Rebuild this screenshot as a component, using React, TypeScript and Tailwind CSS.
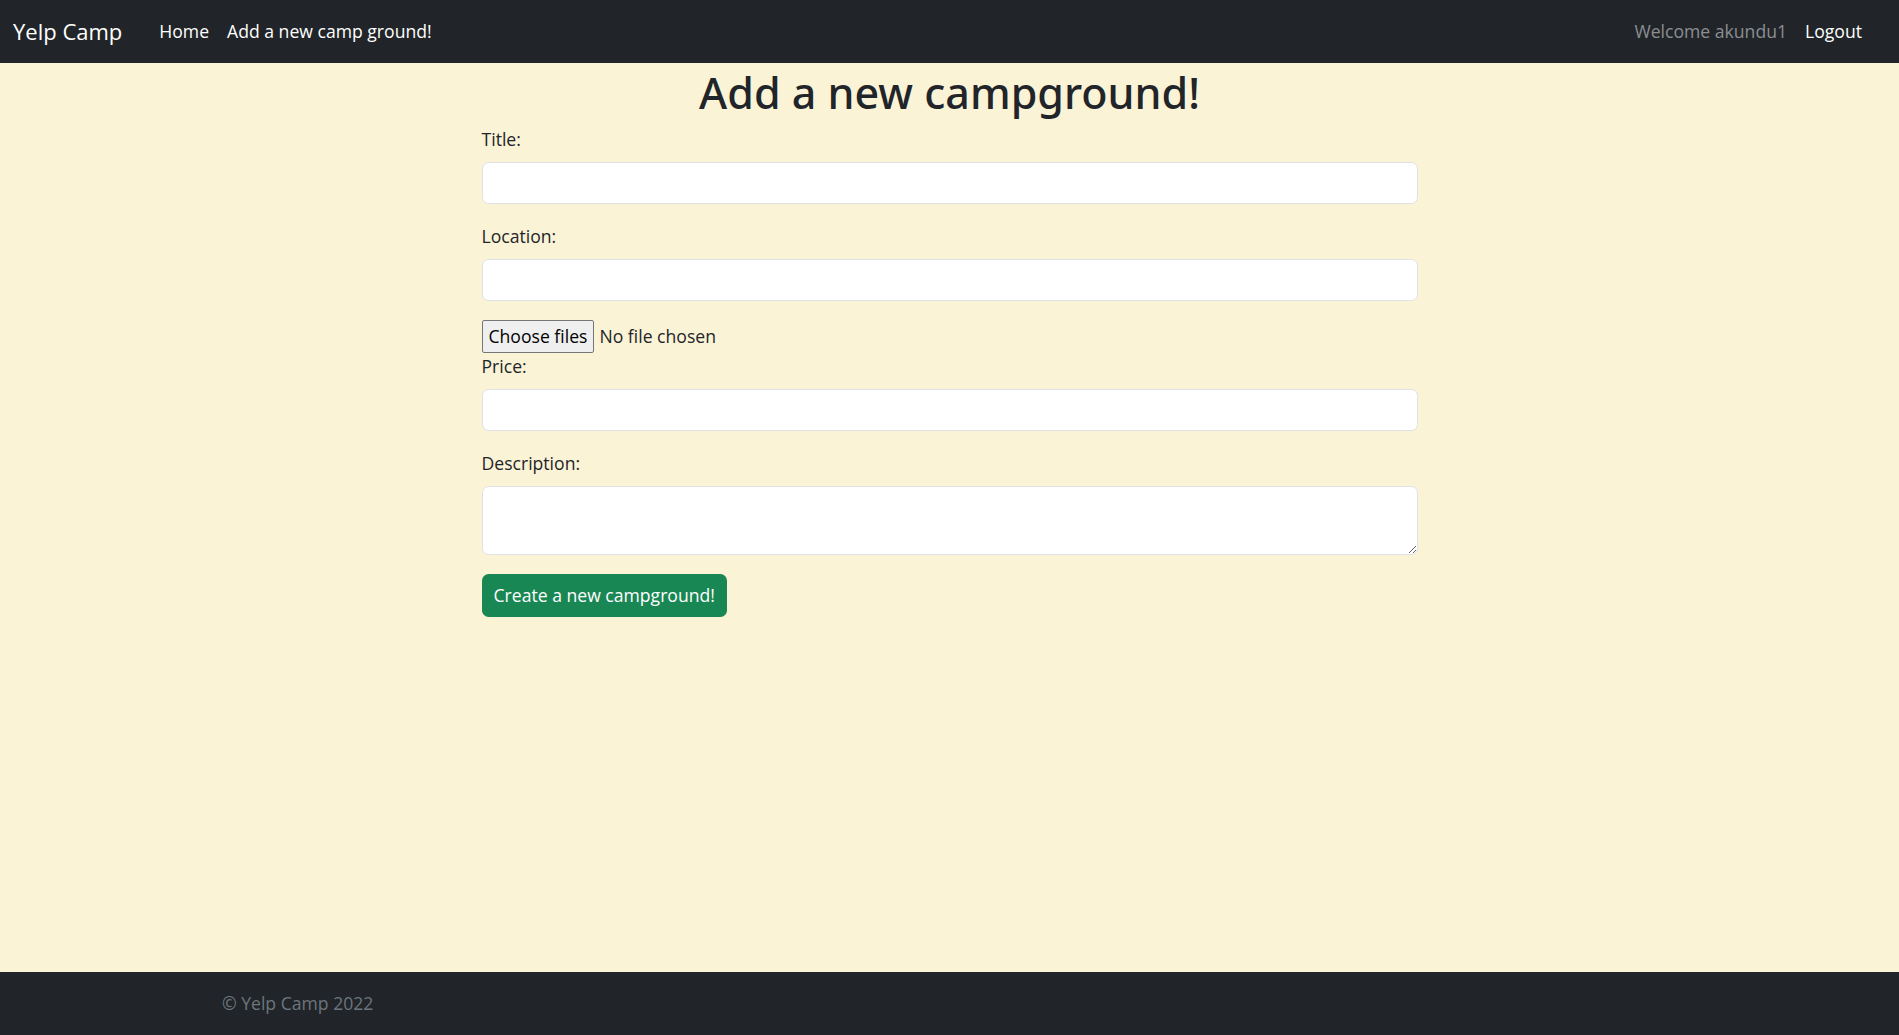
const inputCls =
  'block w-full h-[42px] bg-white border border-[#dee2e6] rounded-[6.6px] px-[13px] outline-none';

function Field({ label, id }: { label: string; id: string }) {
  return (
    <div className="mb-[19px]">
      <label htmlFor={id} className="block leading-[26px] mb-[10px]">
        {label}
      </label>
      <input id={id} type="text" className={inputCls} />
    </div>
  );
}

export default function App() {
  return (
    <div
      className="min-h-screen flex flex-col bg-[#fbf3d6] text-[#212529] text-[17.6px] leading-[26.4px]"
      style={{ fontFamily: '"Open Sans", sans-serif' }}
    >
      <nav className="h-[63px] bg-[#212529] flex items-center px-[13px] shrink-0">
        <span className="text-[22px] text-white mr-[37px]">Yelp Camp</span>
        <a className="text-white mr-[18px]">Home</a>
        <a className="text-white">Add a new camp ground!</a>
        <div className="ml-auto flex items-center gap-[18px] pr-[24px]">
          <span className="text-[#8c8e91]">Welcome akundu1</span>
          <a className="text-white">Logout</a>
        </div>
      </nav>

      <main className="flex-1">
        <h1
          className="text-[43px] leading-[53px] font-medium text-center pt-[3px] mb-[7px]"
          style={{ fontFamily: '"Noto Sans", sans-serif' }}
        >
          Add a new campground!
        </h1>
        <form className="w-[936px] mx-auto">
          <Field label="Title:" id="title" />
          <Field label="Location:" id="location" />

          <div className="flex items-center h-[33px]">
            <button
              type="button"
              className="h-[33px] px-[6px] bg-[#efefef] border border-[#767676] rounded-[2px] text-[#000] mr-[5px]"
            >
              Choose files
            </button>
            <span>No file chosen</span>
          </div>

          <div className="mb-[19px]">
            <label htmlFor="price" className="block leading-[26px] mb-[10px]">
              Price:
            </label>
            <input id="price" type="text" className={inputCls} />
          </div>

          <div className="mb-[19px]">
            <label htmlFor="description" className="block leading-[26px] mb-[10px]">
              Description:
            </label>
            <textarea
              id="description"
              className="block w-full h-[69px] bg-white border border-[#dee2e6] rounded-[6.6px] px-[13px] py-[7px] outline-none"
            />
          </div>

          <button
            type="button"
            className="h-[43px] px-[12px] bg-[#198754] text-white rounded-[6.6px]"
          >
            Create a new campground!
          </button>
        </form>
      </main>

      <footer className="h-[63px] bg-[#212529] flex items-center pl-[222px] shrink-0">
        <span className="text-[#6c757d]">© Yelp Camp 2022</span>
      </footer>
    </div>
  );
}
